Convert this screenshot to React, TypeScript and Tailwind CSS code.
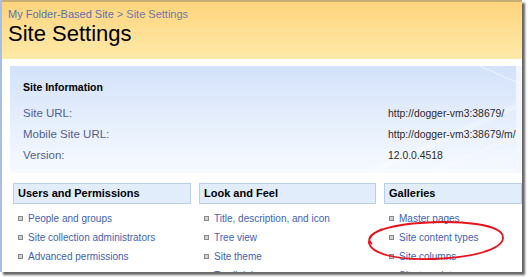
import React from "react";

const font = { fontFamily: '"Liberation Sans", Arial, sans-serif' };

const sections = [
  { title: "Users and Permissions", width: "w-[178px]", items: ["People and groups", "Site collection administrators", "Advanced permissions"] },
  { title: "Look and Feel", width: "w-[177px]", items: ["Title, description, and icon", "Tree view", "Site theme", "Top link bar"] },
  { title: "Galleries", width: "flex-1", items: ["Master pages", "Site content types", "Site columns", "Site templates"] },
];

const info = [
  ["Site URL:", "http://dogger-vm3:38679/"],
  ["Mobile Site URL:", "http://dogger-vm3:38679/m/"],
  ["Version:", "12.0.0.4518"],
];

export default function App() {
  return (
    <div className="relative w-[528px] h-[277px] bg-white overflow-hidden" style={font}>
      {/* screenshot frame */}
      <div className="w-[522px] h-[272px] overflow-hidden bg-white border-l-2 border-[#a6bfe9] shadow-[3px_3px_2px_rgba(0,0,0,0.6)]">
        {/* yellow title bar */}
        <div className="h-[59px] border-t-2 border-[#c6ad78] bg-gradient-to-b from-[#fed47c] to-[#feeaa9] pl-[6px] pt-[5px]">
          <div className="text-[11px] leading-[14px] text-[#6d7aa6]">
            <span className="text-[#5a70b0]">My Folder-Based Site</span> &gt; Site Settings
          </div>
          <div className="text-[22px] leading-[26px] text-black">Site Settings</div>
        </div>

        {/* site information panel */}
        <div className="flex mt-[7px]">
          <div className="relative ml-2 w-[506px] h-[107px] bg-gradient-to-b from-[#d3e2fa] to-[#f7faff] pl-[13px] pt-[11px] overflow-hidden">
            <svg className="absolute inset-0 pointer-events-none" width="506" height="107">
              <line x1="470" y1="0" x2="506" y2="16" stroke="#ffffff" strokeOpacity="0.6" strokeWidth="1" />
              <line x1="360" y1="107" x2="506" y2="40" stroke="#ffffff" strokeOpacity="0.25" strokeWidth="6" />
              <line x1="420" y1="107" x2="506" y2="70" stroke="#ffffff" strokeOpacity="0.2" strokeWidth="4" />
            </svg>
            <div className="relative text-[10.5px] leading-[21px] font-bold text-black">Site Information</div>
            <div className="relative mt-[5px]">
              {info.map(([k, v]) => (
                <div key={k} className="flex h-[21px] items-center whitespace-nowrap">
                  <div className="w-[365px] shrink-0 text-[11.5px] text-[#52608f]">{k}</div>
                  <div className="text-[10.4px] text-[#2a2a2a]">{v}</div>
                </div>
              ))}
            </div>
          </div>
          <div className="flex-1 bg-[#f3f7fd]" />
        </div>

        {/* setting sections */}
        <div className="flex gap-2 pl-[11px] pt-[10px]">
          {sections.map((s) => (
            <div key={s.title} className={s.width}>
              <div className="h-[21px] border border-[#b8cef0] bg-[#e2edfc] pl-1 flex items-center text-[11px] font-bold text-black">
                {s.title}
              </div>
              <ul className="mt-[5px]">
                {s.items.map((it) => (
                  <li key={it} className="h-[19px] flex items-center">
                    <span className="ml-[5px] mr-[5px] w-[5px] h-[5px] border border-[#8a8a8a] bg-[#d2d2d2]" />
                    <span className="text-[10px] text-[#3f5fb6] whitespace-nowrap">{it}</span>
                  </li>
                ))}
              </ul>
            </div>
          ))}
        </div>
      </div>

      {/* red annotation ellipse */}
      <svg className="absolute left-0 top-0 pointer-events-none" width="528" height="277">
        <path
          d="M 372 244 C 362 236, 380 226, 420 223 C 460 220, 502 224, 503 237 C 504 250, 470 258, 432 259 C 396 260, 372 254, 369 243 C 368 238, 374 232, 382 229"
          fill="none"
          stroke="#e8121b"
          strokeWidth="1.8"
        />
      </svg>
    </div>
  );
}
